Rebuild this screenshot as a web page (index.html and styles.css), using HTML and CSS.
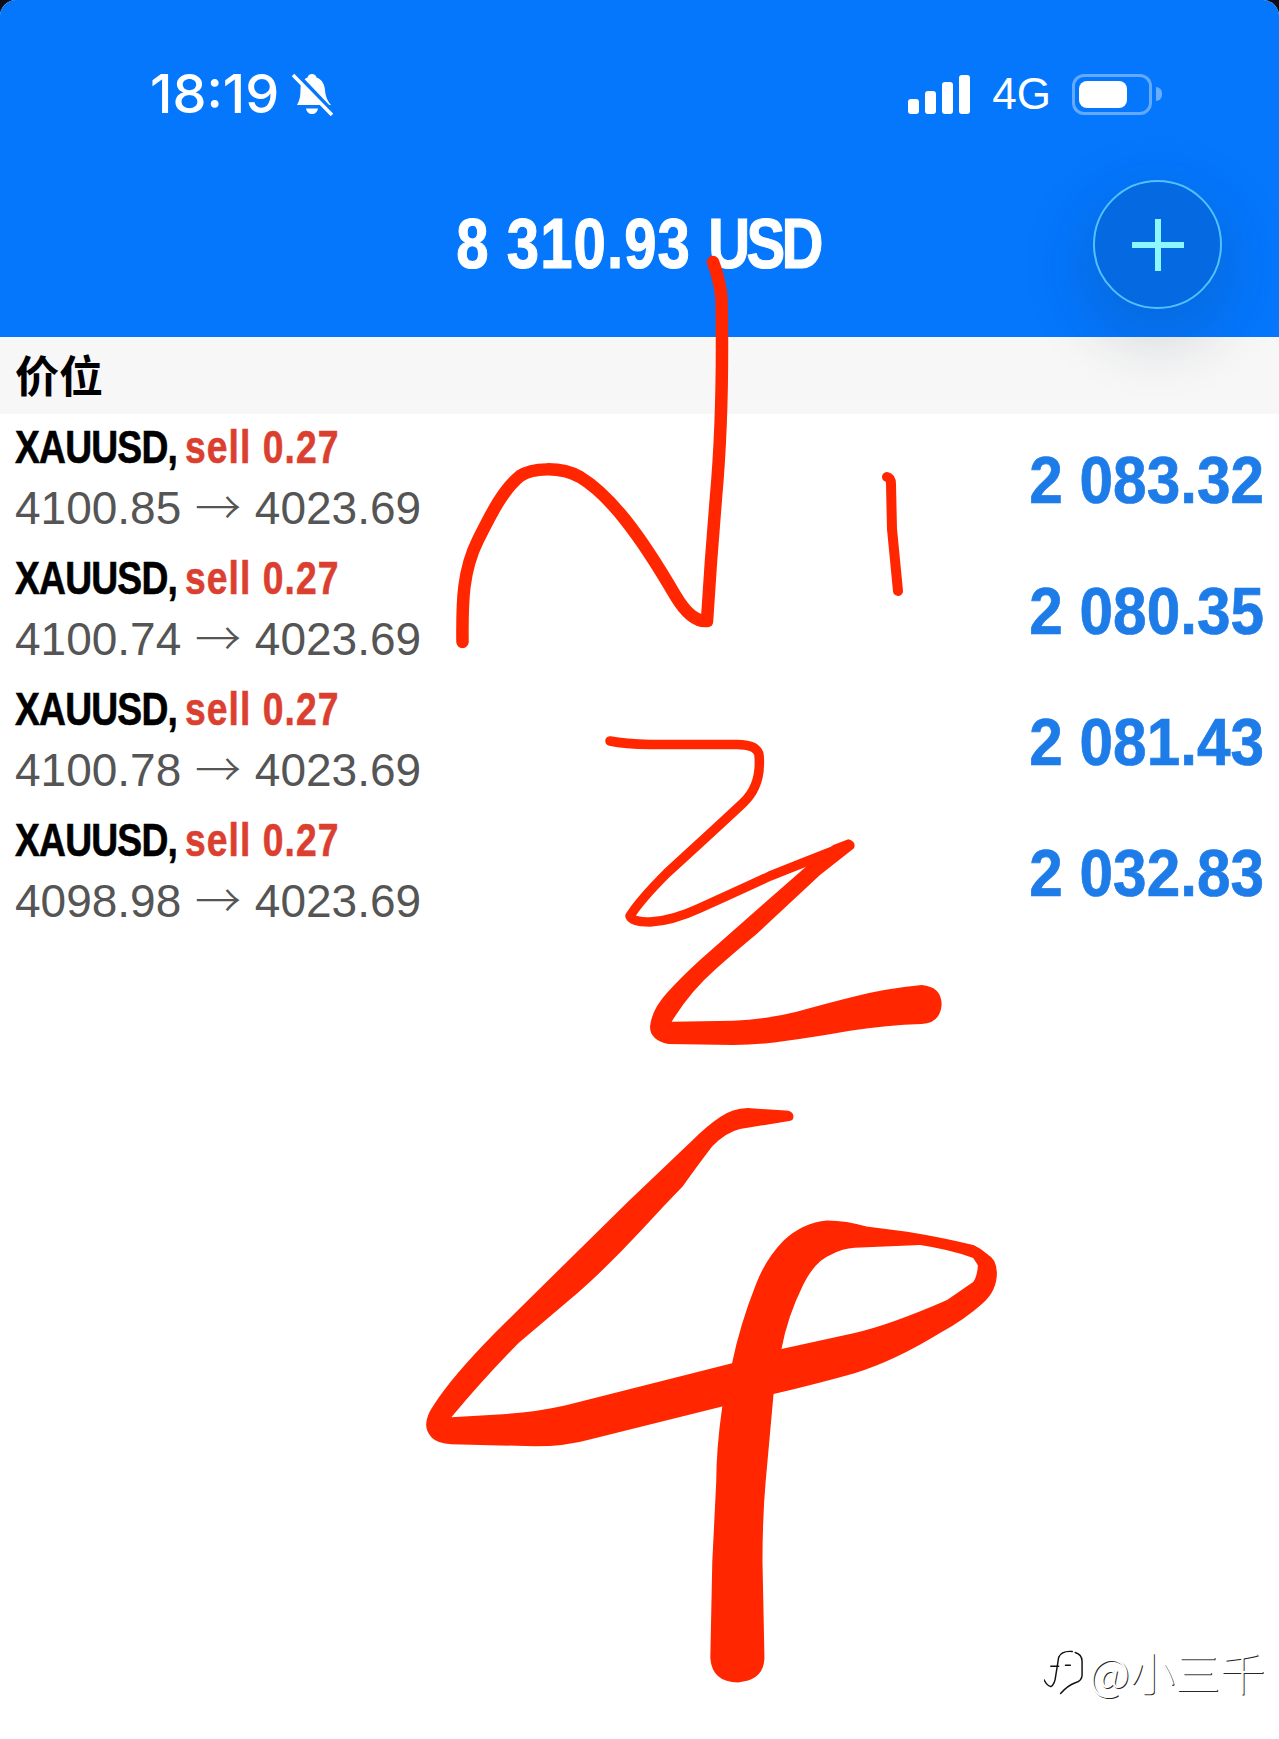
FILE: index.html
```html
<!DOCTYPE html>
<html lang="zh">
<head>
<meta charset="utf-8">
<title>Positions</title>
<link rel="stylesheet" href="styles.css">
</head>
<body>
<main class="phone">
  <header class="top">
    <div class="status">
      <div class="status-left">
        <span class="clock">18:19</span>
        <svg class="bell" viewBox="0 0 42 44" aria-hidden="true">
          <path class="bell-body" d="M21 2C23.500 2 25 3.500 25.500 5.500C31 7.500 33.500 12 34 18C34.500 24 36 28 40 33L6 33C9 28 9.500 23 9.500 17C9.500 11 12 7.500 16.500 5.500C17 3.500 18.500 2 21 2Z"/>
          <path class="bell-body" d="M15 36.500L27 36.500C26.500 40 24 42 21 42C18 42 15.500 40 15 36.500Z"/>
          <path class="bell-gap" d="M3 -1L44 42"/>
          <path class="bell-slash" d="M2 3L41 43"/>
        </svg>
      </div>
      <div class="status-right">
        <div class="signal"><i class="b1"></i><i class="b2"></i><i class="b3"></i><i class="b4"></i></div>
        <span class="net">4G</span>
        <div class="battery"><div class="battery-fill"></div></div>
        <div class="battery-nub"></div>
      </div>
    </div>
    <div class="balance"><span class="balance-text">8 310.93 <span class="unit">USD</span></span></div>
    <button class="add" aria-label="add">
      <svg class="plus" viewBox="0 0 52 52" aria-hidden="true"><path d="M0 26H52M26 0V52"/></svg>
    </button>
  </header>

  <h2 class="section">价位</h2>

  <ul class="rows">
    <li class="row">
      <div>
        <div class="title"><b>XAUUSD,</b> <em>sell 0.27</em></div>
        <div class="prices">4100.85 <span class="arrow">→</span> 4023.69</div>
      </div>
      <div class="profit">2 083.32</div>
    </li>
    <li class="row">
      <div>
        <div class="title"><b>XAUUSD,</b> <em>sell 0.27</em></div>
        <div class="prices">4100.74 <span class="arrow">→</span> 4023.69</div>
      </div>
      <div class="profit">2 080.35</div>
    </li>
    <li class="row">
      <div>
        <div class="title"><b>XAUUSD,</b> <em>sell 0.27</em></div>
        <div class="prices">4100.78 <span class="arrow">→</span> 4023.69</div>
      </div>
      <div class="profit">2 081.43</div>
    </li>
    <li class="row">
      <div>
        <div class="title"><b>XAUUSD,</b> <em>sell 0.27</em></div>
        <div class="prices">4098.98 <span class="arrow">→</span> 4023.69</div>
      </div>
      <div class="profit">2 032.83</div>
    </li>
  </ul>

  <svg class="scribble" viewBox="0 0 1279 1739" aria-hidden="true">
    <path class="ink w12" d="M462.500 642C462 600 463 570 478 540C492 512 503 490 520 476C532 468 560 466 580 477C610 495 640 535 675 595C685 612 695 622 707 621L711 561L716 497Q722 430 722 347Q722 300 721 293Q718 275 713 262"/>
    <path class="ink w10" d="M887 477Q891 478 891 484L892 529L898 591"/>
    <path class="ink w9" d="M610 741Q625 744 650 744.500L735 744.500Q757 744 759 755Q762 785 743 803Q725 820 667 873Q640 900 630 916Q632 922 650 922Q672 921 700 908Q740 890 770 876Q810 860 846 846"/>
    <path class="fill" transform="translate(600 810) scale(.3333)" d="M745 88Q770 95 762 115L660 195L470 372Q400 430 350 475Q270 545 215 635L400 632Q500 628 590 605Q680 580 760 560Q860 535 965 525Q1025 530 1025 585Q1020 640 965 642Q860 645 750 662Q650 680 560 692Q480 705 400 705L205 702Q150 690 150 650Q155 600 200 550Q240 505 300 450L430 335L630 160L700 105Z"/>
    <g transform="translate(400 1080) scale(0.3953 0.4016)">
      <path class="fill" d="M995 88Q992 76 975 76L880 70Q840 72 810 92Q775 115 740 150L580 300L420 455L240 630Q130 740 85 810Q50 860 80 890Q95 905 130 907L340 912Q420 912 480 895L820 812L945 782Q1060 755 1150 730Q1250 700 1366 630Q1430 595 1475 555Q1510 525 1510 480Q1508 445 1488 436Q1470 420 1450 411L1462 461Q1460 490 1450 503Q1410 530 1384 548Q1240 610 1150 630L965 670L840 705L640 755L420 810Q340 828 260 832L130 840Q210 745 300 655L450 530Q530 460 610 375Q670 310 715 265Q755 210 790 165Q825 130 860 122L985 102Q997 100 995 88Z"/>
      <path class="fill" d="M1488 436Q1470 420 1450 411Q1370 392 1283 378L1180 365Q1130 350 1080 350Q1020 355 970 400Q925 445 900 510Q860 610 840 705L815 815Q800 920 800 1000L790 1200L785 1440Q790 1500 855 1500Q920 1495 922 1440L917 1200Q917 1090 925 1000L945 782L965 670Q980 590 1020 510Q1050 450 1090 435Q1120 420 1150 418L1316 411Q1390 422 1450 443L1462 461Z"/>
    </g>
  </svg>

  <div class="mark">
    <svg class="mark-logo" viewBox="0 0 42 46" aria-hidden="true">
      <path d="M32 3Q39 5 39 12V26Q39 32 32 34Q24 37 17 45"/>
      <path d="M29 2Q18 1 15 8L12 27Q11 36 7 38Q3 37 0 31"/>
      <path d="M7 17H15M22 16H27"/>
    </svg>
    <span class="mark-text">@小三千</span>
  </div>
</main>
</body>
</html>
```
FILE: styles.css
```css
* { box-sizing: border-box; }
html, body { margin: 0; padding: 0; background: #0d0d1a; }
.phone {
  position: relative;
  width: 1279px;
  height: 1739px;
  overflow: hidden;
  background: #fff;
  border-radius: 16px 16px 0 0;
  font-family: "Liberation Sans", Arial, sans-serif;
}
.top {
  position: relative;
  height: 337px;
  background: #0477fd;
  color: #fff;
}
.status {
  display: flex;
  justify-content: space-between;
  align-items: center;
  height: 40px;
  padding: 0 117px 0 150px;
  transform: translateY(74px);
}
.status-left, .status-right { display: flex; align-items: center; }
.clock {
  font-family: Inter, Roboto, sans-serif;
  font-size: 54px;
  font-weight: 500;
  line-height: 40px;
}
.bell { width: 42px; height: 44px; margin-left: 12px; }
.bell-body { fill: #fff; }
.bell-gap { stroke: #0477fd; stroke-width: 4; fill: none; }
.bell-slash { stroke: #fff; stroke-width: 3.500; fill: none; }
.signal { display: flex; align-items: flex-end; gap: 6px; height: 39px; }
.signal i { display: block; width: 11px; background: #fff; border-radius: 3px; }
.b1 { height: 15px; }
.b2 { height: 23px; }
.b3 { height: 32px; }
.b4 { height: 39px; }
.net {
  margin-left: 22px;
  font-size: 44px;
  line-height: 40px;
  font-weight: 400;
}
.battery {
  width: 80px;
  height: 41px;
  margin-left: 21px;
  padding: 4px;
  border: 3px solid rgba(255, 255, 255, .38);
  border-radius: 12px;
}
.battery-fill { width: 48px; height: 100%; background: #fff; border-radius: 8px; }
.battery-nub {
  width: 6px;
  height: 14px;
  margin-left: 4px;
  background: rgba(255, 255, 255, .4);
  border-radius: 0 7px 7px 0;
}
.balance {
  position: absolute;
  left: 0;
  right: 3px;
  top: 204px;
  text-align: center;
  font-size: 70px;
  line-height: 80px;
  font-weight: 700;
}
.balance-text {
  display: inline-block;
  transform: scaleX(.83);
  letter-spacing: 1.300px;
  -webkit-text-stroke: 1.100px #fff;
}
.unit { letter-spacing: -4.500px; }
.add {
  position: absolute;
  left: 1093px;
  top: 180px;
  width: 129px;
  height: 129px;
  padding: 0;
  border: 2.500px solid #52c2ff;
  border-radius: 50%;
  background: #0569e2;
  box-shadow: 0 22px 60px 14px rgba(30, 40, 70, .15);
  display: flex;
  align-items: center;
  justify-content: center;
}
.plus { width: 52px; height: 52px; }
.plus path { stroke: #8ef6ff; stroke-width: 6; fill: none; }
.section {
  margin: 0;
  height: 77px;
  padding: 11px 0 0 15px;
  background: #f7f7f7;
  font-family: "Noto Sans CJK SC", sans-serif;
  font-size: 44px;
  line-height: 52px;
  font-weight: 700;
  color: #000;
}
.rows { list-style: none; margin: 0; padding: 0 15px; }
.row {
  display: flex;
  justify-content: space-between;
  align-items: center;
  height: 131px;
}
.title, .prices { font-size: 46px; line-height: 61px; white-space: nowrap; }
.title {
  font-weight: 700;
  transform: scaleX(.81);
  transform-origin: left center;
  -webkit-text-stroke: .6px currentColor;
}
.title b { color: #000; letter-spacing: -1px; }
.title em { font-style: normal; color: #db3f30; letter-spacing: 1.300px; margin-left: -3px; }
.prices { color: #555; margin-top: -4px; margin-bottom: 4px; }
.arrow { font-family: "Noto Sans CJK SC", sans-serif; font-weight: 300; margin: 0 1px; }
.profit {
  font-size: 66px;
  line-height: 70px;
  font-weight: 700;
  color: #1d7ce8;
  transform: scaleX(.913);
  transform-origin: right center;
  -webkit-text-stroke: .7px #1d7ce8;
}
.scribble { position: absolute; left: 0; top: 0; width: 1279px; height: 1739px; pointer-events: none; }
.ink { fill: none; stroke: #ff2600; stroke-linecap: round; stroke-linejoin: round; }
.w9 { stroke-width: 9.500px; }
.w10 { stroke-width: 10px; }
.w12 { stroke-width: 12.500px; }
.fill { fill: #ff2600; }
.mark {
  position: absolute;
  left: 1044px;
  top: 1646px;
  display: flex;
  align-items: center;
  gap: 4px;
}
.mark-logo { width: 41px; height: 46px; }
.mark-logo path { fill: none; stroke: #111; stroke-width: 1.500; stroke-linecap: round; }
.mark-text {
  font-family: "Noto Sans CJK SC", sans-serif;
  font-size: 45px;
  line-height: 52px;
  font-weight: 300;
  color: #fff;
  text-shadow: 1px 1px 0 rgba(0, 0, 0, .85);
}
```
